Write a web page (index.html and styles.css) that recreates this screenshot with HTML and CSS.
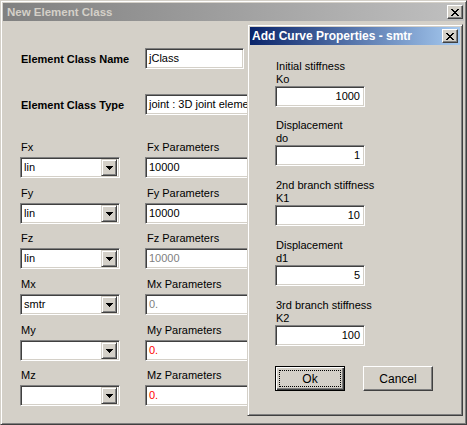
FILE: index.html
```html
<!DOCTYPE html>
<html>
<head>
<meta charset="utf-8">
<link rel="stylesheet" href="styles.css">
</head>
<body>
<div class="window">
  <div class="titlebar inactive">
    <span class="title">New Element Class</span>
    <span class="close"><svg width="8" height="7" viewBox="0 0 8 7" shape-rendering="crispEdges"><path d="M0 0h2v1h-2z M6 0h2v1h-2z M1 1h2v1h-2z M5 1h2v1h-2z M2 2h4v1h-4z M3 3h2v1h-2z M2 4h4v1h-4z M1 5h2v1h-2z M5 5h2v1h-2z M0 6h2v1h-2z M6 6h2v1h-2z" fill="#000"/></svg></span>
  </div>
  <div class="content">
    <div class="head-row">
      <span class="head-label">Element Class Name</span>
      <div class="sunken field name-field">jClass</div>
    </div>
    <div class="head-row">
      <span class="head-label">Element Class Type</span>
      <div class="sunken field type-field">joint : 3D joint element</div>
    </div>
    <div class="params">
      <div class="cell"><div class="lbl">Fx</div><div class="sunken combo"><span class="ctext">lin</span><span class="dd"><svg width="7" height="4" viewBox="0 0 7 4" shape-rendering="crispEdges"><path d="M0 0h7v1h-7z M1 1h5v1h-5z M2 2h3v1h-3z M3 3h1v1h-1z" fill="#000"/></svg></span></div></div>
      <div class="cell right"><div class="lbl">Fx Parameters</div><div class="sunken field pfield">10000</div></div>

      <div class="cell"><div class="lbl">Fy</div><div class="sunken combo"><span class="ctext">lin</span><span class="dd"><svg width="7" height="4" viewBox="0 0 7 4" shape-rendering="crispEdges"><path d="M0 0h7v1h-7z M1 1h5v1h-5z M2 2h3v1h-3z M3 3h1v1h-1z" fill="#000"/></svg></span></div></div>
      <div class="cell right"><div class="lbl">Fy Parameters</div><div class="sunken field pfield">10000</div></div>

      <div class="cell"><div class="lbl">Fz</div><div class="sunken combo"><span class="ctext">lin</span><span class="dd"><svg width="7" height="4" viewBox="0 0 7 4" shape-rendering="crispEdges"><path d="M0 0h7v1h-7z M1 1h5v1h-5z M2 2h3v1h-3z M3 3h1v1h-1z" fill="#000"/></svg></span></div></div>
      <div class="cell right"><div class="lbl">Fz Parameters</div><div class="sunken field pfield disabled">10000</div></div>

      <div class="cell"><div class="lbl">Mx</div><div class="sunken combo"><span class="ctext">smtr</span><span class="dd"><svg width="7" height="4" viewBox="0 0 7 4" shape-rendering="crispEdges"><path d="M0 0h7v1h-7z M1 1h5v1h-5z M2 2h3v1h-3z M3 3h1v1h-1z" fill="#000"/></svg></span></div></div>
      <div class="cell right"><div class="lbl">Mx Parameters</div><div class="sunken field pfield disabled">0.</div></div>

      <div class="cell"><div class="lbl">My</div><div class="sunken combo"><span class="ctext"></span><span class="dd"><svg width="7" height="4" viewBox="0 0 7 4" shape-rendering="crispEdges"><path d="M0 0h7v1h-7z M1 1h5v1h-5z M2 2h3v1h-3z M3 3h1v1h-1z" fill="#000"/></svg></span></div></div>
      <div class="cell right"><div class="lbl">My Parameters</div><div class="sunken field pfield red">0.</div></div>

      <div class="cell"><div class="lbl">Mz</div><div class="sunken combo"><span class="ctext"></span><span class="dd"><svg width="7" height="4" viewBox="0 0 7 4" shape-rendering="crispEdges"><path d="M0 0h7v1h-7z M1 1h5v1h-5z M2 2h3v1h-3z M3 3h1v1h-1z" fill="#000"/></svg></span></div></div>
      <div class="cell right"><div class="lbl">Mz Parameters</div><div class="sunken field pfield red">0.</div></div>
    </div>
  </div>

  <div class="dialog">
    <div class="titlebar active">
      <span class="title dtitle">Add Curve Properties - smtr</span>
      <span class="close"><svg width="8" height="7" viewBox="0 0 8 7" shape-rendering="crispEdges"><path d="M0 0h2v1h-2z M6 0h2v1h-2z M1 1h2v1h-2z M5 1h2v1h-2z M2 2h4v1h-4z M3 3h2v1h-2z M2 4h4v1h-4z M1 5h2v1h-2z M5 5h2v1h-2z M0 6h2v1h-2z M6 6h2v1h-2z" fill="#000"/></svg></span>
    </div>
    <div class="dbody">
      <div class="dblock"><div class="dlbl">Initial stiffness<br>Ko</div><div class="sunken field num">1000</div></div>
      <div class="dblock"><div class="dlbl">Displacement<br>do</div><div class="sunken field num">1</div></div>
      <div class="dblock"><div class="dlbl">2nd branch stiffness<br>K1</div><div class="sunken field num">10</div></div>
      <div class="dblock"><div class="dlbl">Displacement<br>d1</div><div class="sunken field num">5</div></div>
      <div class="dblock"><div class="dlbl">3rd branch stiffness<br>K2</div><div class="sunken field num">100</div></div>
      <div class="buttons">
        <div class="btn default"><div class="focus">Ok</div></div>
        <div class="btn">Cancel</div>
      </div>
    </div>
  </div>
</div>
</body>
</html>
```
FILE: styles.css
```css
* { box-sizing: border-box; }
html, body { margin: 0; padding: 0; }
body {
  width: 467px;
  height: 425px;
  overflow: hidden;
  background: #d4d0c8;
  font-family: "Liberation Sans", Arial, sans-serif;
  font-size: 11px;
  color: #000;
}
.window {
  position: relative;
  width: 467px;
  height: 425px;
  background: #d4d0c8;
  border: 1px solid;
  border-color: #d4d0c8 #404040 #404040 #d4d0c8;
  box-shadow: inset 1px 1px #fff, inset -1px -1px #808080;
  padding: 2px;
}
.titlebar {
  height: 18px;
  display: flex;
  align-items: center;
  justify-content: space-between;
  padding: 0 1px 0 4px;
}
.titlebar.inactive {
  background: linear-gradient(to right, #808080, #c0c0c0);
  color: #d4d0c8;
}
.titlebar.active {
  background: linear-gradient(to right, #0a246a, #a6caf0);
  color: #fff;
  padding: 0 2px 0 2px;
}
.title {
  font-weight: bold;
  font-size: 11.5px;
  white-space: nowrap;
}
.dtitle { font-size: 12px; }
.close {
  width: 16px;
  height: 14px;
  background: #d4d0c8;
  border: 1px solid;
  border-color: #fff #404040 #404040 #fff;
  box-shadow: inset -1px -1px #808080;
  display: flex;
  align-items: center;
  justify-content: center;
}
.close svg { display: block; }

.content { padding: 27px 0 0 17px; }
.head-row {
  display: flex;
  align-items: center;
  height: 21px;
}
.head-row + .head-row { margin-top: 25px; }
.head-label {
  width: 125px;
  font-weight: bold;
  padding-left: 1px;
  white-space: nowrap;
}
.sunken {
  background: #fff;
  border: 1px solid;
  border-color: #808080 #fff #fff #808080;
  box-shadow: inset 1px 1px #404040, inset -1px -1px #d4d0c8;
}
.field {
  height: 21px;
  line-height: 19px;
  padding: 0 3px;
  white-space: nowrap;
  overflow: hidden;
}
.name-field { width: 99px; }
.type-field { width: 140px; }

.params {
  margin-top: 26px;
  display: grid;
  grid-template-columns: 100px 140px;
  grid-template-rows: 37px 36px 37px 37px 36px 37px;
  column-gap: 25px;
  row-gap: 9px;
}
.lbl {
  height: 13px;
  line-height: 13px;
  margin-bottom: 3px;
  padding-left: 1px;
  white-space: nowrap;
}
.right .lbl { padding-left: 2px; }
.pfield { width: 140px; }
.disabled { color: #808080; }
.red { color: #ff0000; }

.combo {
  width: 100px;
  height: 21px;
  display: flex;
  align-items: center;
  justify-content: space-between;
  padding: 2px;
}
.ctext { padding-left: 1px; line-height: 17px; }
.dd {
  width: 16px;
  height: 17px;
  background: #d4d0c8;
  border: 1px solid;
  border-color: #d4d0c8 #404040 #404040 #d4d0c8;
  box-shadow: inset 1px 1px #fff, inset -1px -1px #808080;
  display: flex;
  align-items: center;
  justify-content: center;
}
.dd svg { display: block; }

.dialog {
  position: absolute;
  left: 246px;
  top: 23px;
  width: 216px;
  height: 392px;
  background: #d4d0c8;
  border: 1px solid;
  border-color: #d4d0c8 #404040 #404040 #d4d0c8;
  box-shadow: inset 1px 1px #fff, inset -1px -1px #808080;
  padding: 2px;
}
.dbody { padding: 15px 0 0 25px; }
.dblock { margin-bottom: 13px; }
.dblock:first-child { margin-bottom: 12px; }
.dlbl {
  line-height: 13px;
  padding-left: 1px;
  white-space: nowrap;
}
.num {
  width: 90px;
  text-align: right;
  padding-right: 4px;
}
.buttons {
  margin-top: 20px;
  display: flex;
  gap: 18px;
}
.btn {
  width: 70px;
  height: 25px;
  background: #d4d0c8;
  border: 1px solid;
  border-color: #fff #404040 #404040 #fff;
  box-shadow: inset -1px -1px #808080;
  display: flex;
  align-items: center;
  justify-content: center;
  font-size: 12px;
}
.btn.default {
  border: 1px solid #000;
  box-shadow: inset 1px 1px #fff, inset -1px -1px #404040, inset -2px -2px #808080;
  padding: 3px;
}
.focus {
  width: 100%;
  height: 100%;
  border: 1px dotted #000;
  display: flex;
  align-items: center;
  justify-content: center;
}
```
